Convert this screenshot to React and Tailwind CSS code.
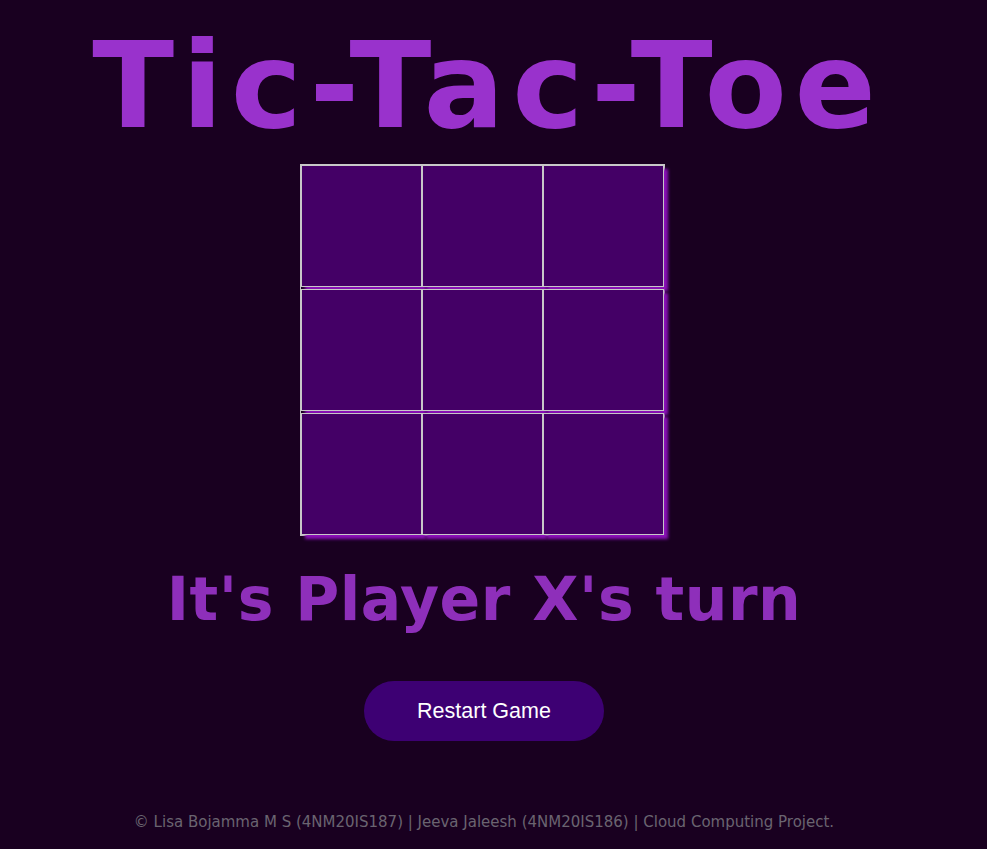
import React, { useState } from 'react';

export default function App() {
  const [cells, setCells] = useState(Array(9).fill(''));
  const [player, setPlayer] = useState('X');

  const play = (i) => {
    if (cells[i]) return;
    const next = [...cells];
    next[i] = player;
    setCells(next);
    setPlayer(player === 'X' ? 'O' : 'X');
  };

  const restart = () => {
    setCells(Array(9).fill(''));
    setPlayer('X');
  };

  const rows = [0, 1, 2];

  return (
    <div className="min-h-[849px] w-full bg-[#190020] font-['DejaVu_Sans',Verdana,sans-serif]">
      <div className="w-[968px] flex flex-col items-center">
        <h1 className="mt-[16px] pl-[8px] text-[120px] leading-[140px] tracking-[7.7px] font-bold text-[#9932cc]">Tic-Tac-Toe</h1>

        {/* board */}
        <div className="mt-[8px] mr-[4px] flex flex-col gap-[2px] border border-[#c8c8c8]">
          {rows.map(r => (
            <div key={r} className="flex">
              {rows.map(c => {
                const i = r * 3 + c;
                return (
                  <div
                    key={i}
                    onClick={() => play(i)}
                    className="w-[121px] h-[122px] border border-[#c8c8c8] bg-[#440066] shadow-[4px_4px_3px_#8a10b8] flex items-center justify-center text-[72px] font-bold text-[#d9a6f2] cursor-pointer"
                  >
                    {cells[i]}
                  </div>
                );
              })}
            </div>
          ))}
        </div>

        <h2 className="mt-[28px] text-[60px] leading-[70px] tracking-[0.5px] font-bold text-[#8e2fba]">It's Player {player}'s turn</h2>

        <button
          type="button"
          onClick={restart}
          className="mt-[47px] w-[240px] h-[60px] rounded-full bg-[#3d0073] text-white text-[21.5px] font-['Liberation_Sans',Arial,sans-serif]"
        >
          Restart Game
        </button>

        <p className="mt-[70px] text-[15px] text-[#6a6470]">
          © Lisa Bojamma M S (4NM20IS187) | Jeeva Jaleesh (4NM20IS186) | Cloud Computing Project.
        </p>
      </div>
    </div>
  );
}
